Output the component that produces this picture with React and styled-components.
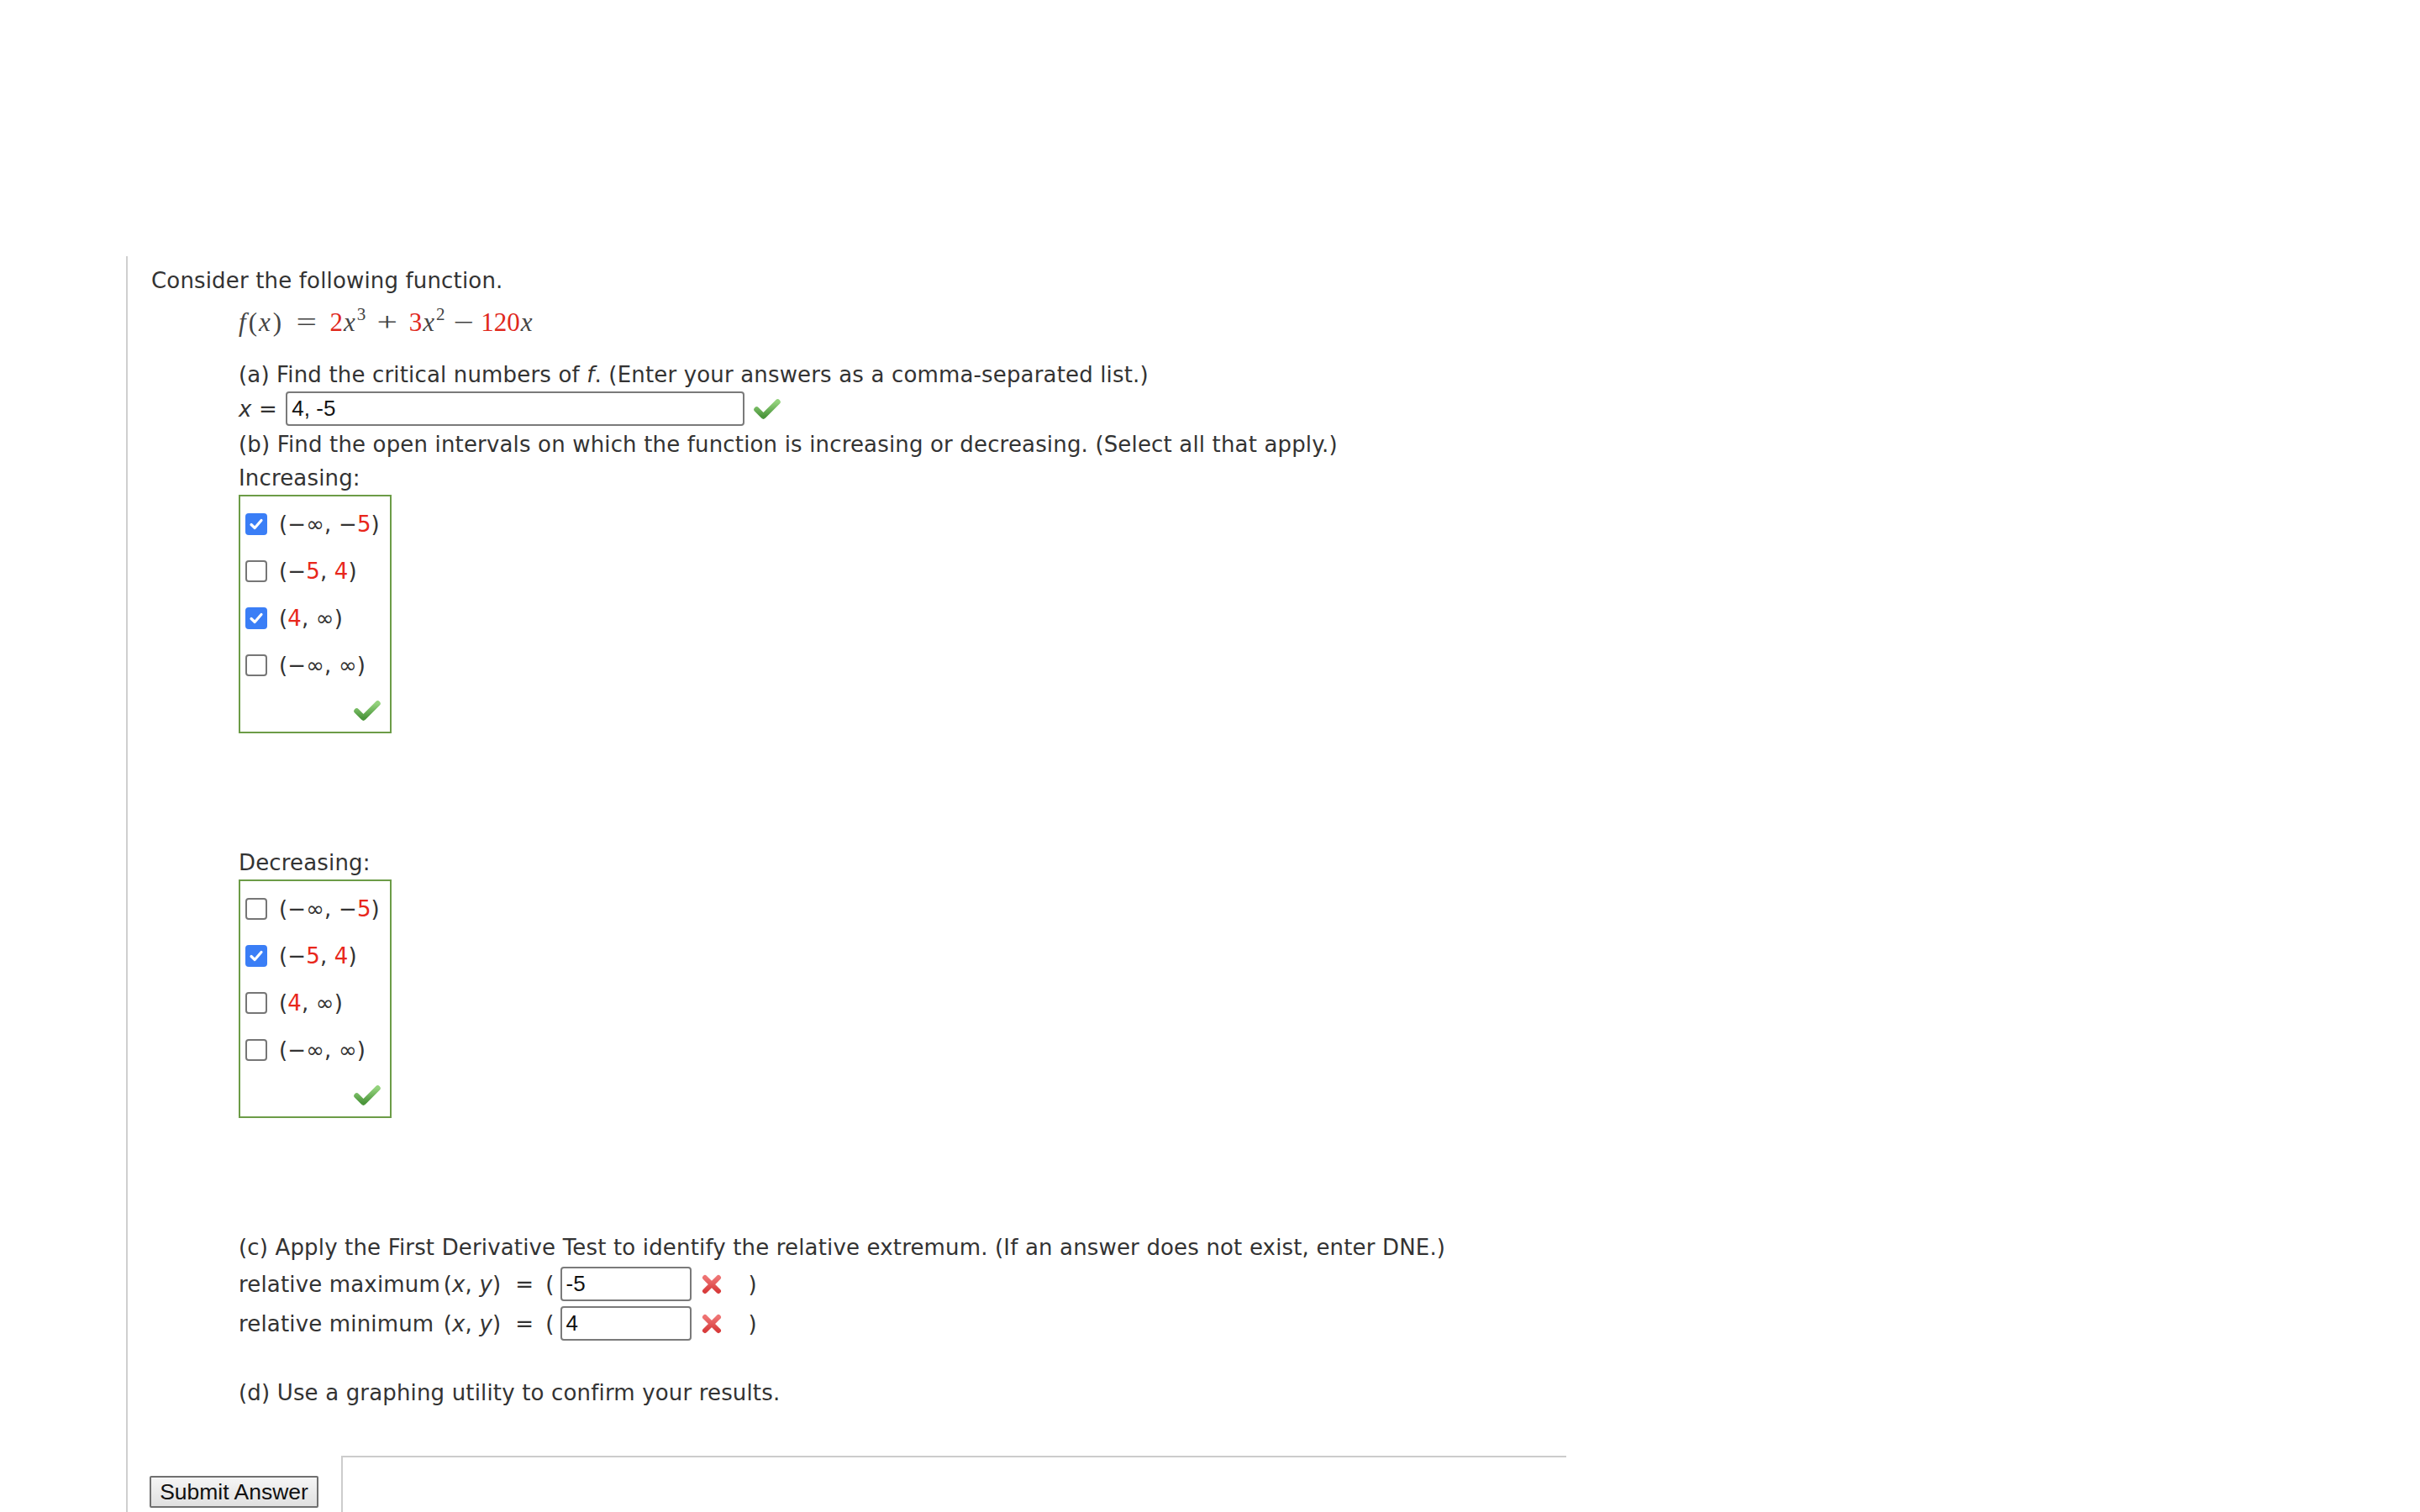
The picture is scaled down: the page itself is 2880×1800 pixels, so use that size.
import React, { useId } from 'react';
import styled, { createGlobalStyle } from 'styled-components';

const GlobalStyle = createGlobalStyle`
  html, body { margin: 0; padding: 0; background: #fff; }
  body {
    font-family: "DejaVu Sans", Verdana, sans-serif;
    font-size: 26px;
    letter-spacing: 0.16px;
    color: #333;
  }
`;

const Page = styled.div`
  box-sizing: border-box;
  height: 1800px;
  overflow: hidden;
  padding: 305px 0 0 150px;
`;

const Question = styled.div`
  box-sizing: border-box;
  min-height: 1495px;
  border-left: 2px solid #cfcfcf;
  padding: 9px 0 0 28px;
  display: flex;
  flex-direction: column;
  align-items: flex-start;
`;

const Intro = styled.div`
  line-height: 40px;
  white-space: nowrap;
`;

const Part = styled.div`
  margin-left: 104px;
  margin-top: ${(p) => p.$mt || 0}px;
  line-height: 40px;
  white-space: nowrap;
`;

const MathLine = styled.div`
  margin-left: 104px;
  margin-top: 10px;
  height: 40px;
  line-height: 40px;
  font-family: "Liberation Serif", "Times New Roman", serif;
  font-size: 31px;
  letter-spacing: 0;
  color: #444;
  white-space: nowrap;
  display: flex;
  align-items: baseline;
`;

const MI = styled.span`
  font-style: italic;
  margin-left: ${(p) => p.$ml || 0}px;
  margin-right: ${(p) => p.$mr || 0}px;
`;

const MRed = styled.span`
  color: #e0281c;
`;

const MSup = styled.span`
  font-size: 0.68em;
  line-height: 0;
  position: relative;
  top: -0.62em;
  margin-left: 2px;
`;

const MOp = styled.span`
  display: inline-block;
  transform: scaleX(1.4);
  margin: 0 ${(p) => p.$r || 12}px 0 ${(p) => p.$l || 12}px;
`;

const AnswerRow = styled.div`
  margin-left: 104px;
  height: 41px;
  display: flex;
  align-items: center;
  white-space: nowrap;
`;

const Em = styled.i`
  font-style: italic;
`;

const TextInput = styled.div`
  box-sizing: border-box;
  width: ${(p) => p.$w}px;
  height: 41px;
  margin-left: ${(p) => p.$ml || 0}px;
  border: 2px solid #7a7a7a;
  border-radius: 4px;
  padding: 0 5px;
  display: flex;
  align-items: center;
  font-family: "Liberation Sans", Arial, sans-serif;
  font-size: 26px;
  letter-spacing: 0;
  color: #111;
  background: #fff;
`;

const IconSlot = styled.span`
  display: inline-flex;
  margin-left: ${(p) => p.$ml || 0}px;
`;

const ChoiceBox = styled.div`
  box-sizing: border-box;
  width: 182px;
  border: 2px solid #6c9c47;
  padding: 5px 0 0 6px;
  display: flex;
  flex-direction: column;
`;

const Option = styled.label`
  height: 56px;
  display: flex;
  align-items: center;
  gap: 14px;
  white-space: nowrap;
`;

const Box = styled.span`
  box-sizing: border-box;
  width: 26px;
  height: 26px;
  border-radius: 4px;
  flex: none;
  display: inline-flex;
  align-items: center;
  justify-content: center;
  background: ${(p) => (p.$checked ? '#3a7ef6' : '#fff')};
  border: ${(p) => (p.$checked ? 'none' : '2px solid #767676')};
`;

const Red = styled.span`
  color: #e8271b;
`;

const CheckRow = styled.div`
  height: 51px;
  display: flex;
  align-items: center;
  justify-content: flex-end;
  padding-right: 11px;
`;

const ExtremaGrid = styled.div`
  margin-left: 104px;
  display: grid;
  grid-template-columns: max-content max-content max-content;
  grid-auto-rows: 47px;
  align-items: center;
  white-space: nowrap;
`;

const ExtLabel = styled.span`
  padding-right: 3px;
`;

const EqCell = styled.div`
  display: flex;
  align-items: center;
`;

const Glyph = styled.span`
  margin-left: ${(p) => p.$ml || 0}px;
`;

const Footer = styled.div`
  margin-top: 55px;
  margin-left: -2px;
  display: flex;
  align-items: flex-start;
`;

const SubmitButton = styled.button`
  box-sizing: border-box;
  margin-top: 24px;
  width: 201px;
  height: 38px;
  padding: 0;
  border: 2px solid #707070;
  border-radius: 2px;
  background: linear-gradient(#f5f5f5, #e0e0e0);
  font-family: "Liberation Sans", Arial, sans-serif;
  font-size: 26.5px;
  letter-spacing: 0;
  color: #111;
`;

const ResultPanel = styled.div`
  margin-left: 27px;
  width: 1456px;
  height: 120px;
  border-top: 2px solid #cccccc;
  border-left: 2px solid #cccccc;
`;

function GreenCheck() {
  const id = useId().replace(/:/g, '');
  return (
    <svg width="32" height="27" viewBox="0 0 32 27">
      <defs>
        <linearGradient id={`g${id}`} x1="0" y1="0" x2="0" y2="1">
          <stop offset="0" stopColor="#93d27c" />
          <stop offset="1" stopColor="#4c963c" />
        </linearGradient>
      </defs>
      <path
        d="M3.5 14.5 L11.5 22.5 L28.5 5.5"
        fill="none"
        stroke={`url(#g${id})`}
        strokeWidth="6.5"
        strokeLinejoin="round"
        strokeLinecap="round"
      />
    </svg>
  );
}

function RedX() {
  const id = useId().replace(/:/g, '');
  return (
    <svg width="26" height="26" viewBox="0 0 26 26">
      <defs>
        <linearGradient id={`r${id}`} x1="0" y1="0" x2="0" y2="1">
          <stop offset="0" stopColor="#ee7373" />
          <stop offset="1" stopColor="#d83c3c" />
        </linearGradient>
      </defs>
      <path
        d="M5 5 L21 21 M21 5 L5 21"
        fill="none"
        stroke={`url(#r${id})`}
        strokeWidth="6"
        strokeLinecap="round"
      />
    </svg>
  );
}

function Checkbox({ checked }) {
  return (
    <Box $checked={checked}>
      {checked && (
        <svg width="20" height="20" viewBox="0 0 20 20">
          <path d="M4 10.5 L8.2 14.5 L16 5.5" fill="none" stroke="#fff" strokeWidth="3.2" strokeLinecap="round" strokeLinejoin="round" />
        </svg>
      )}
    </Box>
  );
}

const intervals = [
  <>(−∞, −<Red>5</Red>)</>,
  <>(−<Red>5</Red>, <Red>4</Red>)</>,
  <>(<Red>4</Red>, ∞)</>,
  <>(−∞, ∞)</>,
];

function Choices({ checked }) {
  return (
    <ChoiceBox>
      {intervals.map((label, i) => (
        <Option key={i}>
          <Checkbox checked={checked.includes(i)} />
          <span>{label}</span>
        </Option>
      ))}
      <CheckRow>
        <GreenCheck />
      </CheckRow>
    </ChoiceBox>
  );
}

function ExtremumRow({ label, value }) {
  return (
    <>
      <ExtLabel>{label}</ExtLabel>
      <span>(<Em>x</Em>, <Em>y</Em>)</span>
      <EqCell>
        <Glyph $ml={17}>=</Glyph>
        <Glyph $ml={14}>(</Glyph>
        <TextInput $w={156} $ml={7}>{value}</TextInput>
        <IconSlot $ml={11}><RedX /></IconSlot>
        <Glyph $ml={31}>)</Glyph>
      </EqCell>
    </>
  );
}

export default function App() {
  return (
    <>
      <GlobalStyle />
      <Page>
        <Question>
          <Intro>Consider the following function.</Intro>
          <MathLine>
            <MI $mr={3}>f</MI>(<MI $ml={2} $mr={3}>x</MI>)
            <MOp $l={21} $r={19}>=</MOp>
            <MRed>2</MRed><MI $ml={1}>x</MI><MSup>3</MSup>
            <MOp $l={17} $r={17}>+</MOp>
            <MRed>3</MRed><MI $ml={1}>x</MI><MSup>2</MSup>
            <MOp $l={13} $r={12}>−</MOp>
            <MRed>120</MRed><MI $ml={1}>x</MI>
          </MathLine>
          <Part $mt={22}>
            (a) Find the critical numbers of <Em>f</Em>. (Enter your answers as a comma-separated list.)
          </Part>
          <AnswerRow>
            <Em>x</Em>&nbsp;=&nbsp;
            <TextInput $w={546} $ml={2}>4, -5</TextInput>
            <IconSlot $ml={11}><GreenCheck /></IconSlot>
          </AnswerRow>
          <Part $mt={2}>
            (b) Find the open intervals on which the function is increasing or decreasing. (Select all that apply.)
          </Part>
          <Part>Increasing:</Part>
          <Part>
            <Choices checked={[0, 2]} />
          </Part>
          <Part $mt={134}>Decreasing:</Part>
          <Part>
            <Choices checked={[1]} />
          </Part>
          <Part $mt={134}>
            (c) Apply the First Derivative Test to identify the relative extremum. (If an answer does not exist, enter DNE.)
          </Part>
          <ExtremaGrid>
            <ExtremumRow label="relative maximum" value="-5" />
            <ExtremumRow label={'relative minimum\u00a0'} value="4" />
          </ExtremaGrid>
          <Part $mt={39}>(d) Use a graphing utility to confirm your results.</Part>
          <Footer>
            <SubmitButton>Submit Answer</SubmitButton>
            <ResultPanel />
          </Footer>
        </Question>
      </Page>
    </>
  );
}
